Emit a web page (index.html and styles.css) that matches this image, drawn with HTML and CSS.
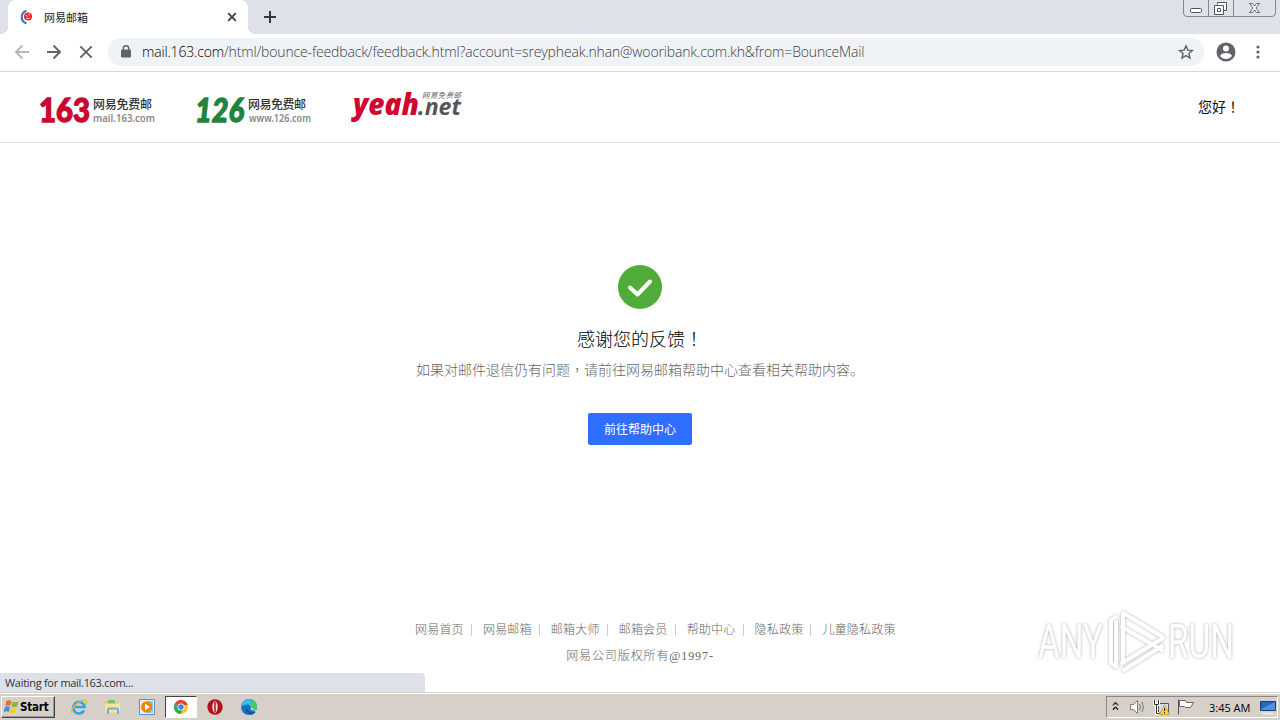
FILE: index.html
```html
<!doctype html>
<html lang="zh-CN">
	<head>
		<meta charset="utf-8" />
		<title>网易邮箱</title>
		<link rel="stylesheet" href="styles.css">
	</head>
	<body>
		<div class="tabs">
			<div class="tab">
				<svg class="tab-logo" width="16" height="16" viewBox="0 0 16 16">
					<path d="M7.500 1.700A6.700 6.700 0 0 0 7.500 14.500" fill="none" stroke="#3e78c4" stroke-width="2.200" />
					<circle cx="9" cy="7.400" r="4" fill="#e5222b" />
					<path d="M6.500 6.200l2 1.200M10.500 4.500l-.5 2M7 9.800l4-.8" stroke="#fff" stroke-width=".8" />
				</svg>
				<span class="tab-title">网易邮箱</span>
				<svg width="10" height="10" viewBox="0 0 10 10"><path d="M1.200 1.200l7.600 7.600M8.800 1.200L1.200 8.800" stroke="#3c4043" stroke-width="1.800" /></svg>
			</div>
			<svg class="tab-add" width="12" height="12" viewBox="0 0 12 12"><path d="M6 0v12M0 6h12" stroke="#33363b" stroke-width="2" /></svg>
			<svg class="win-btns" width="94" height="17" viewBox="0 0 94 17">
				<path d="M.5 0v13q0 3.500 3.500 3.500h85q3.500 0 3.500-3.500V0M25.500 0v16M50.500 0v16" fill="#dfe2e8" stroke="#83878f" />
				<rect x="7.500" y="8.500" width="11" height="4" rx="1" fill="#fff" stroke="#50545c" />
				<path d="M34.500 4.500v-2h9v8h-3" fill="#fff" stroke="#50545c" />
				<path d="M31.500 5.500h9v9h-9zM34.500 8.500h3v3h-3z" fill="#fff" stroke="#50545c" />
				<path d="M66.500 3.500h3l2 2.500 2-2.500h3l-3.500 4.500 3.500 4.500h-3l-2-2.500-2 2.500h-3L70 8z" fill="#fff" stroke="#50545c" stroke-width=".9" />
			</svg>
		</div>

		<div class="toolbar">
			<svg class="nav" width="100" height="20" viewBox="0 0 100 20" fill="none" stroke-width="1.900">
				<path d="M21 10H8M14.500 3.500L8 10l6.500 6.500" stroke="#b4b6b9" />
				<path d="M39 10h13M45.500 3.500L52 10l-6.500 6.500" stroke="#5f6368" />
				<path d="M72.300 4.300l11.400 11.400M83.700 4.300L72.300 15.700" stroke="#5f6368" />
			</svg>
			<div class="address">
				<svg width="10" height="13" viewBox="0 0 10 13"><rect y="4.500" width="10" height="8" rx="1" fill="#5f6368" /><path d="M2.300 5V3.400a2.700 2.700 0 0 1 5.400 0V5" fill="none" stroke="#5f6368" stroke-width="1.400" /></svg>
				<span class="url"><b>mail.163.com</b>/html/bounce-feedback/feedback.html?account=sreypheak.nhan@wooribank.com.kh&amp;from=BounceMail</span>
				<svg class="star" width="16" height="16" viewBox="0 0 16 16"><path d="M8 1.800l1.800 4.300 4.600.4-3.500 3 1.100 4.600L8 11.600l-4 2.500 1.100-4.600-3.500-3 4.600-.4z" fill="none" stroke="#5f6368" stroke-width="1.400" /></svg>
			</div>
			<svg class="avatar" width="20" height="20" viewBox="0 0 20 20"><circle cx="10" cy="10" r="9.500" fill="#5f6368" /><circle cx="10" cy="6.500" r="3" fill="#fff" /><path d="M4 14c1-4 11-4 12 0-3 4-9 4-12 0z" fill="#fff" /></svg>
			<svg width="4" height="14" viewBox="0 0 4 14" fill="#5f6368"><circle cx="2" cy="2" r="1.600" /><circle cx="2" cy="7" r="1.600" /><circle cx="2" cy="12" r="1.600" /></svg>
		</div>

		<div class="page">
			<div class="header">
				<svg class="logos" width="430" height="60" viewBox="0 0 430 60">
					<g class="logo-num">
						<text class="red" x="0" y="44.500" textLength="51" lengthAdjust="spacingAndGlyphs">163</text>
						<text class="green" x="156" y="44.500" textLength="49" lengthAdjust="spacingAndGlyphs">126</text>
					</g>
					<g class="logo-name">
						<text x="54" y="32" textLength="59">网易免费邮</text>
						<text x="209" y="32" textLength="58">网易免费邮</text>
					</g>
					<g class="logo-host">
						<text x="54" y="45" textLength="62" lengthAdjust="spacingAndGlyphs">mail.163.com</text>
						<text x="210" y="45" textLength="62" lengthAdjust="spacingAndGlyphs">www.126.com</text>
					</g>
					<text class="logo-yeah" x="314" y="38" textLength="66" lengthAdjust="spacingAndGlyphs">yeah</text>
					<text class="logo-net" x="379" y="38" textLength="43" lengthAdjust="spacingAndGlyphs">.net</text>
					<text class="logo-small" x="383" y="20.500" textLength="39">网易免费邮</text>
				</svg>
				<span class="hello">您好<i lang="zh-TW">！</i></span>
			</div>

			<div class="result">
				<svg width="44" height="44" viewBox="0 0 44 44"><circle cx="22" cy="22" r="22" fill="#50ac38" /><path d="M12 22.500l7.500 7L32 16.500" fill="none" stroke="#fff" stroke-width="4" stroke-linecap="round" stroke-linejoin="round" /></svg>
				<h1>感谢您的反馈<i lang="zh-TW">！</i></h1>
				<p>如果对邮件退信仍有问题<i lang="zh-TW">，</i>请前往网易邮箱帮助中心查看相关帮助内容。</p>
				<a class="btn">前往帮助中心</a>
			</div>

			<div class="footer">
				<div class="links">
					<a>网易首页</a><a>网易邮箱</a><a>邮箱大师</a><a>邮箱会员</a><a>帮助中心</a><a>隐私政策</a><a>儿童隐私政策</a>
				</div>
				<div class="copyright">网易公司版权所有@1997-</div>
			</div>

			<div class="status">Waiting for mail.163.com...</div>

			<svg class="watermark" width="210" height="76" viewBox="0 0 210 76">
				<g class="mark-text">
					<text x="8" y="56" textLength="65" lengthAdjust="spacingAndGlyphs">ANY</text>
					<text x="138" y="56" textLength="66" lengthAdjust="spacingAndGlyphs">RUN</text>
				</g>
				<g class="mark-line">
					<path d="M93 58V11l40 24" />
					<path d="M92 25l40 23M92 61l41-25" />
					<path d="M86 15l-5 3v43l5 4V20M94 68l38-24" />
				</g>
			</svg>
		</div>

		<div class="taskbar">
			<div class="start">
				<svg width="17" height="16" viewBox="0 0 17 16">
					<path d="M3.500 2q2.500-1.500 5 0L7.300 7q-2.500-1.500-5 0z" fill="#ed6b2c" />
					<path d="M9.500 2.500q2.500 1.500 6 0L14 7.500q-3 1.500-5.500 0z" fill="#7eb83d" />
					<path d="M2 8q2.500-1.500 5 0l-1.300 5q-2.300-1.500-5 0z" fill="#3f8edb" />
					<path d="M8 8.700q3 1.500 5.700 0l-1.400 5q-3 1.500-5.600 0z" fill="#f8c82f" />
				</svg>
				<span>Start</span>
			</div>
			<div class="apps">
				<div class="app"><svg width="18" height="18" viewBox="0 0 18 18">
					<path d="M14 12.500A5.800 5.800 0 1 1 14.700 9H5" fill="none" stroke="#37a3df" stroke-width="2.600" />
					<path d="M2 15C-1 12 10 0 16 2.500c1.500.8.600 2.800.3 3.500" fill="none" stroke="#e9b62c" stroke-width="1.300" />
				</svg></div>
				<div class="app"><svg width="18" height="18" viewBox="0 0 18 18">
					<path d="M1 3h6l1 1.500h6v10H1z" fill="#e9c55b" /><path d="M4 2h7v4H4z" fill="#7fbd6c" /><path d="M1 5.500h15v9H1z" fill="#f7e49b" /><path d="M4 16v-4q0-1.500 1.500-1.500h7q1.500 0 1.500 1.500v4" fill="none" stroke="#69b1dc" stroke-width="2" />
				</svg></div>
				<div class="app"><svg width="18" height="18" viewBox="0 0 18 18">
					<path d="M1.500 1.500h15v15h-15z" fill="#e3effa" stroke="#5795cc" /><path d="M9 3h6v12H9z" fill="#9ac5ea" /><circle cx="8.700" cy="9" r="5.700" fill="#f0850f" /><path d="M7 5.800v6.400L12 9z" fill="#fff" />
				</svg></div>
				<div class="app active"><svg width="16" height="16" viewBox="0 0 16 16">
					<circle cx="8" cy="8" r="7" fill="#f6c629" /><path d="M8 8L1.900 4.500A7 7 0 0 1 14.100 4.500L14.700 6H8z" fill="#df4635" /><path d="M1.900 4.500A7 7 0 0 0 7.500 15l3-5.500L8 8z" fill="#35a455" /><circle cx="8" cy="8" r="3.500" fill="#fff" /><circle cx="8" cy="8" r="2.700" fill="#4180e8" />
				</svg></div>
				<div class="app"><svg width="16" height="16" viewBox="0 0 16 16"><circle cx="8" cy="8" r="7.700" fill="#b31217" /><ellipse cx="8" cy="8" rx="2.700" ry="5.700" fill="#eee1df" /><path d="M8 3v10" stroke="#b31217" stroke-width="1.500" /></svg></div>
				<div class="app"><svg width="18" height="18" viewBox="0 0 18 18">
					<circle cx="9" cy="9" r="8" fill="#1474c4" /><path d="M1 9a8 8 0 0 1 16 0q0 3.500-4 3.500-3 0-2-2.500 0-3.500-4-3.500-4 0-6 2.500z" fill="#36bde0" /><path d="M12 2q5 2 5 7 0 3.500-4 3.500l-2-1q3-5-1-8z" fill="#4bc85f" /><path d="M7.500 8q-1.500 3 1.500 5t7 .5q-2 2.500-4 3-6-1-6-5 0-2 1.500-3.500z" fill="#0b5595" /><path d="M10.500 8q1.500 1-.1 3.200Q11 13 16.500 12v2l3-2V19z" fill="#d5d0ca" />
				</svg></div>
			</div>
			<div class="tray">
				<svg width="82" height="18" viewBox="0 0 82 18">
					<path d="M4 7.500L6.500 5 9 7.500M4 12l2.500-2.500L9 12M4 6.700l2.500-2.500L9 6.700M4 11.200l2.500-2.500L9 11.200" fill="none" stroke="#111" />
					<path d="M21.500 6.500h3l4-4v13l-4-4h-3z" fill="#fff" stroke="#77797c" /><path d="M30.500 6q2 3 0 6M33 4q3 5 0 10" fill="none" stroke="#77797c" />
					<path d="M49.500 5.500h10v9h-10z" fill="#cfdee8" stroke="#4e565c" /><path d="M45.500 2v4.500h4V2M47.500 6v9.500h3" fill="none" stroke="#fff" stroke-width="3" /><path d="M45.500 2v4.500h4V2M47.500 6v9.500h3" fill="none" stroke="#333" />
					<path d="M55.500 7l5 9.500h-10z" fill="#f8d929" stroke="#bd9818" stroke-width=".7" /><path d="M55.500 10v3M55.500 14v1.300" stroke="#222" />
					<path d="M69.500 1.500v15" stroke="#555" /><path d="M70.500 2.500h6l1 2h7l-3 5h-5l-1-1h-5z" fill="#fff" stroke="#666" />
				</svg>
				<span class="clock">3:45 AM</span>
				<svg width="17" height="16" viewBox="0 0 17 16"><path d="M.5 2.500h15v9H.5z" fill="#2468bd" stroke="#183f79" /><path d="M1 10L15 3v8H1z" fill="#4c92dc" /><path d="M3 14.500h10" stroke="#eef2f6" stroke-width="1.500" /></svg>
			</div>
		</div>
	</body>
</html>
```
FILE: styles.css
```css
* { box-sizing: border-box; }
html, body, h1, p { margin: 0; padding: 0; }
body { display: flex; flex-direction: column; width: 1280px; height: 720px; overflow: hidden; background: #fff; font-family: "Open Sans", "Noto Sans CJK SC", sans-serif; }
svg { display: block; flex: none; overflow: visible; }
span, a { white-space: nowrap; }
/* centred full-width punctuation */
i { font-family: "Noto Sans CJK TC", sans-serif; font-style: normal; line-height: 1; }

.tabs { position: relative; display: flex; align-items: center; height: 34px; padding-left: 8px; background: #dee1e8; }
.tab { position: relative; display: flex; align-items: center; width: 240px; height: 34px; padding: 0 11px; background: #fff; border-radius: 8px 8px 0 0; }
.tab:before, .tab:after { content: ""; position: absolute; bottom: 0; width: 8px; height: 8px; }
.tab:before { left: -8px; background: radial-gradient(circle at 0 0, #dee1e8 8px, #fff 8.5px); }
.tab:after { right: -8px; background: radial-gradient(circle at 100% 0, #dee1e8 8px, #fff 8.5px); }
.tab-title { flex: 1; padding: 0 0 1px 9px; font-size: 11px; color: #222; }
.tab-add { margin-left: 16px; }
.win-btns { position: absolute; top: 0; right: 3px; }

.toolbar { display: flex; align-items: center; height: 38px; padding: 0 19px 2px 8px; border-bottom: 1px solid #d5d6d8; }
.address { display: flex; align-items: center; width: 1096px; height: 28px; padding: 0 10px 0 13px; background: #f0f3f5; border-radius: 14px; }
.url { flex: 1; padding-left: 11px; font-size: 14px; font-weight: 300; letter-spacing: -.15px; color: #3c4043; }
.url b { font-weight: 300; letter-spacing: -.17px; color: #000; }
.avatar { margin: 0 20px 0 12px; }

.page { position: relative; display: flex; flex-direction: column; height: 620px; }
.header { display: flex; align-items: center; justify-content: space-between; height: 71px; padding: 0 40px 0 39px; border-bottom: 1px solid #e2e2e2; }
.logo-num { font: 900 33px Lato, sans-serif; stroke-width: 1.3; }
.red { fill: #c9062f; stroke: #c9062f; }
.green { font-style: italic; fill: #22843c; stroke: #22843c; }
.logo-name { font: 500 12px "Noto Sans CJK SC", sans-serif; fill: #333; }
.logo-host { font: 600 10px "Noto Sans", sans-serif; fill: #888; }
.logo-yeah { font: italic 900 30px "Noto Sans", sans-serif; fill: #d10530; }
.logo-net { font: italic bold 23px "Noto Sans", sans-serif; fill: #555; }
.logo-small { font: italic 7.5px "Noto Sans CJK SC", sans-serif; fill: #666; }
.hello { padding-bottom: 2px; font-size: 14px; color: #111; }

.result { display: flex; flex-direction: column; align-items: center; padding-top: 122px; }
.result h1 { height: 28px; margin-top: 16px; font-size: 18px; line-height: 28px; font-weight: 300; color: #000; }
.result p { height: 20px; margin-top: 7px; font-size: 14px; line-height: 20px; font-weight: 300; color: #666; }
.btn { width: 104px; height: 32px; margin-top: 33px; padding-top: 1px; line-height: 32px; text-align: center; font-size: 12px; color: #fff; background: #2f6fff; border-radius: 2px; }

.footer { margin-top: auto; padding-bottom: 27px; font-size: 12px; color: #666; font-weight: 300; }
.links { display: flex; padding-left: 415px; line-height: 22px; }
.links a { display: flex; align-items: center; letter-spacing: .2px; }
.links a + a:before { content: ""; width: 1px; height: 12px; margin: 0 11px 0 7.1px; background: #ccc; }
.copyright { line-height: 18px; margin-top: 6px; text-align: center; font-family: "Liberation Serif", "Noto Sans CJK SC", serif; letter-spacing: .9px; }
.status { position: absolute; left: 0; bottom: 0; width: 425px; height: 19px; padding-left: 5px; line-height: 20px; font-size: 11px; letter-spacing: -.3px; color: #333; background: #dee1e8; border-top-right-radius: 4px; }
.watermark { position: absolute; left: 1030px; top: 530px; filter: drop-shadow(0 0 1.5px rgba(0,0,0,.32)); }
.mark-text { font: 48px Roboto, sans-serif; fill: #fff; }
.mark-line { fill: none; stroke: #fff; stroke-width: 4; stroke-linejoin: round; stroke-linecap: round; }

.taskbar { display: flex; align-items: center; height: 28px; padding: 1px 2px 0 1px; background: #d6d0c9; border-top: 1px solid #d6d0c9; box-shadow: inset 0 1px #fff; }
.start { display: flex; align-items: center; width: 54px; height: 22px; padding-left: 1px; border: 1px solid; border-color: #fff #444 #444 #fff; box-shadow: inset -1px -1px #999; font: bold 11.5px "DejaVu Sans Condensed", "DejaVu Sans", sans-serif; letter-spacing: -.2px; color: #000; }
.apps { display: flex; margin-left: 7px; }
.app { display: flex; align-items: center; justify-content: center; width: 34px; height: 22px; }
.app.active { width: 32px; margin: 0 1px; background: #fff; border: 1px solid; border-color: #444 #fff #fff #444; }
.tray { display: flex; align-items: center; width: 172px; height: 22px; margin-left: auto; padding-left: 2px; border: 1px solid; border-color: #888 #fff #fff #888; }
.clock { width: 42px; margin: 0 9px 0 18px; font-size: 11px; color: #000; }
```
